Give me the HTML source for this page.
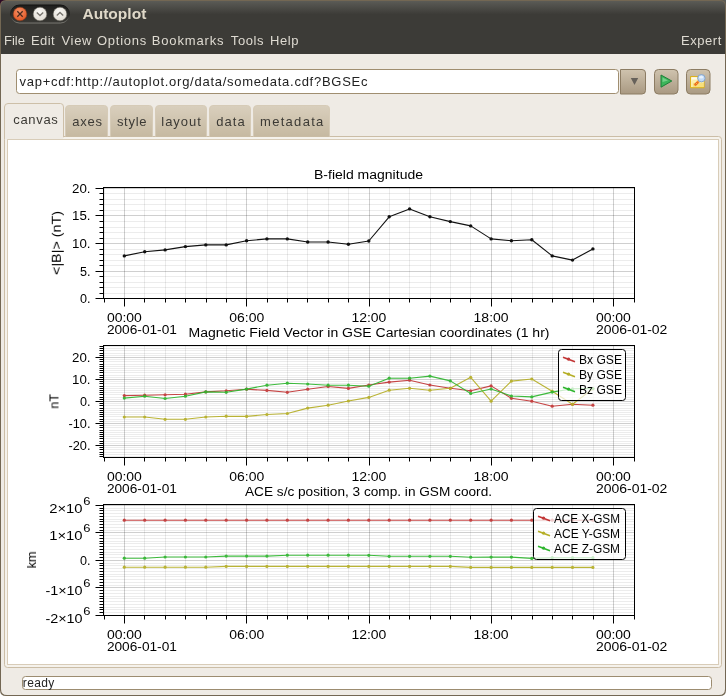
<!DOCTYPE html><html><head><meta charset="utf-8"><style>
html,body{margin:0;padding:0;background:#2c0a24;}
svg{display:block;font-family:"Liberation Sans", sans-serif;}
.g{will-change:transform;}
</style></head><body>
<svg width="726" height="696" viewBox="0 0 726 696" shape-rendering="auto">
<defs>
<linearGradient id="tg" x1="0" y1="0" x2="0" y2="1">
 <stop offset="0" stop-color="#5b5b56"/><stop offset="1" stop-color="#3c3b37"/>
</linearGradient>
<linearGradient id="btn" x1="0" y1="0" x2="0" y2="1">
 <stop offset="0" stop-color="#cfc3ae"/><stop offset="1" stop-color="#a99982"/>
</linearGradient>
<linearGradient id="itab" x1="0" y1="0" x2="0" y2="1">
 <stop offset="0" stop-color="#d9cfbd"/><stop offset="1" stop-color="#c6b9a1"/>
</linearGradient>
<radialGradient id="closeg" cx="0.45" cy="0.35" r="0.7">
 <stop offset="0" stop-color="#f7946a"/><stop offset="1" stop-color="#e0511e"/>
</radialGradient>
<radialGradient id="wg" cx="0.45" cy="0.35" r="0.7">
 <stop offset="0" stop-color="#fbfaf7"/><stop offset="1" stop-color="#ddd8ce"/>
</radialGradient>
<linearGradient id="pills" x1="0" y1="0" x2="0" y2="1">
 <stop offset="0" stop-color="#121211"/><stop offset="0.6" stop-color="#2a2a27"/><stop offset="1" stop-color="#7a7973"/>
</linearGradient>
<linearGradient id="pill" x1="0" y1="0" x2="0" y2="1">
 <stop offset="0" stop-color="#1e1e1c"/><stop offset="1" stop-color="#3a3935"/>
</linearGradient>
</defs>

<rect x="0" y="0" width="726" height="696" fill="#2c0a24"/>
<rect x="716" y="0" width="10" height="10" fill="#5a5a55"/>
<rect x="0" y="680" width="726" height="16" fill="#ffffff"/>
<path d="M0 6 Q0 0 6 0 H720 Q726 0 726 6 V690 Q726 696 720 696 H6 Q0 696 0 690 Z" fill="#736753"/>
<path d="M1 14 H725 V689 Q725 695 719 695 H7 Q1 695 1 689 Z" fill="#efebe5"/>
<rect x="1" y="14" width="724" height="40" fill="#3c3b37"/>
<path d="M1 6 Q1 1 6 1 H720 Q725 1 725 6 V14.5 H1 Z" fill="url(#tg)"/>
<rect x="10.5" y="5" width="59" height="18" rx="9" fill="url(#pill)" stroke="url(#pills)" stroke-width="1"/>
<circle cx="20" cy="14" r="6.8" fill="url(#closeg)" stroke="#8a3a1a" stroke-width="0.5"/>
<path d="M17.3 11.3 L22.7 16.7 M22.7 11.3 L17.3 16.7" stroke="#4a2a1e" stroke-width="1.3"/>
<circle cx="40" cy="14" r="6.8" fill="url(#wg)" stroke="#6a6860" stroke-width="0.5"/>
<path d="M36.8 12.5 L40 15.5 L43.2 12.5" stroke="#77746d" stroke-width="1.4" fill="none"/>
<circle cx="60" cy="14" r="6.8" fill="url(#wg)" stroke="#6a6860" stroke-width="0.5"/>
<path d="M56.8 15.5 L60 12.5 L63.2 15.5" stroke="#77746d" stroke-width="1.4" fill="none"/>
<text class="g" x="82.4" y="18.8" font-size="14.5" fill="#dfd8c8" font-weight="bold" text-anchor="start" textLength="64.0" lengthAdjust="spacingAndGlyphs" >Autoplot</text>
<text class="g" x="4.0" y="44.5" font-size="13" fill="#dfdbd2" font-weight="normal" text-anchor="start" textLength="20.9" lengthAdjust="spacing" >File</text>
<text class="g" x="30.9" y="44.5" font-size="13" fill="#dfdbd2" font-weight="normal" text-anchor="start" textLength="23.7" lengthAdjust="spacing" >Edit</text>
<text class="g" x="61.5" y="44.5" font-size="13" fill="#dfdbd2" font-weight="normal" text-anchor="start" textLength="29.9" lengthAdjust="spacing" >View</text>
<text class="g" x="97.0" y="44.5" font-size="13" fill="#dfdbd2" font-weight="normal" text-anchor="start" textLength="49.2" lengthAdjust="spacing" >Options</text>
<text class="g" x="151.7" y="44.5" font-size="13" fill="#dfdbd2" font-weight="normal" text-anchor="start" textLength="71.9" lengthAdjust="spacing" >Bookmarks</text>
<text class="g" x="230.8" y="44.5" font-size="13" fill="#dfdbd2" font-weight="normal" text-anchor="start" textLength="32.7" lengthAdjust="spacing" >Tools</text>
<text class="g" x="269.9" y="44.5" font-size="13" fill="#dfdbd2" font-weight="normal" text-anchor="start" textLength="28.7" lengthAdjust="spacing" >Help</text>
<text class="g" x="680.9" y="44.5" font-size="13" fill="#dfdbd2" font-weight="normal" text-anchor="start" textLength="40.5" lengthAdjust="spacing" >Expert</text>
<rect x="16.5" y="69.5" width="602" height="24" rx="3" fill="#fff" stroke="#a08e70" stroke-width="1"/>
<text class="g" x="19.5" y="86.1" font-size="13" fill="#222" font-weight="normal" text-anchor="start" textLength="348.0" lengthAdjust="spacing" >vap+cdf:http://autoplot.org/data/somedata.cdf?BGSEc</text>
<path d="M620.5 69.5 H642 Q645.5 69.5 645.5 73 V90.5 Q645.5 94 642 94 H620.5 Z" fill="url(#btn)" stroke="#8c7c63" stroke-width="1"/>
<path d="M630.8 78 H638.2 L634.5 85 Z" fill="#66615a"/>
<rect x="654.5" y="69.5" width="23.5" height="24.5" rx="4" fill="url(#btn)" stroke="#8c7c63" stroke-width="1"/>
<path d="M661 75 L671.8 81 L661 87.2 Z" fill="#3cb55a" stroke="#1f7f38" stroke-width="1" stroke-linejoin="round"/>
<path d="M662.5 77.5 L668 80.5 L662.5 82 Z" fill="#8fdc9e" opacity="0.7"/>
<rect x="686.5" y="69.5" width="23.5" height="24.5" rx="4" fill="url(#btn)" stroke="#8c7c63" stroke-width="1"/>
<rect x="690" y="76" width="14.6" height="12.2" rx="1" fill="#dcb21e"/>
<rect x="691.1" y="77.1" width="6.5" height="4" fill="#fffbea"/>
<rect x="691.1" y="79.3" width="12.4" height="7.8" fill="#fdf3c2"/>
<rect x="692.6" y="80.6" width="11" height="6.4" fill="#f8e07c"/>
<rect x="692.6" y="80.6" width="11" height="2.2" fill="#fdf0b0"/>
<path d="M694.6 85.4 L698.6 81.3" stroke="#e8601e" stroke-width="2.6"/>
<path d="M694.6 85.4 L698.6 81.3" stroke="#ffc83a" stroke-width="1.2" stroke-dasharray="1 1.2"/>
<circle cx="701.4" cy="78.2" r="3.7" fill="#c2daf6" stroke="#7f9fc8" stroke-width="0.9"/>
<ellipse cx="701.2" cy="77.3" rx="2.2" ry="1.3" fill="#e8f2fd"/>
<rect x="4.5" y="136.5" width="717" height="531" fill="#f5f2ec" stroke="#cbbda6" stroke-width="1" rx="3"/>
<rect x="7.5" y="139.5" width="711" height="525" fill="#fff" stroke="#d8ccb8" stroke-width="1"/>
<path d="M65.5 136.5 V109 Q65.5 105.5 69 105.5 H104.5 Q107.5 105.5 107.5 109 V136.5" fill="url(#itab)" stroke="#d6cbb7" stroke-width="1"/>
<text class="g" x="72.2" y="126.2" font-size="13" fill="#3c3a35" font-weight="normal" text-anchor="start" textLength="29.8" lengthAdjust="spacing" >axes</text>
<path d="M110.5 136.5 V109 Q110.5 105.5 114 105.5 H149.5 Q152.5 105.5 152.5 109 V136.5" fill="url(#itab)" stroke="#d6cbb7" stroke-width="1"/>
<text class="g" x="116.9" y="126.2" font-size="13" fill="#3c3a35" font-weight="normal" text-anchor="start" textLength="29.6" lengthAdjust="spacing" >style</text>
<path d="M155.5 136.5 V109 Q155.5 105.5 159 105.5 H203.5 Q206.5 105.5 206.5 109 V136.5" fill="url(#itab)" stroke="#d6cbb7" stroke-width="1"/>
<text class="g" x="161.3" y="126.2" font-size="13" fill="#3c3a35" font-weight="normal" text-anchor="start" textLength="39.5" lengthAdjust="spacing" >layout</text>
<path d="M209.5 136.5 V109 Q209.5 105.5 213 105.5 H247.5 Q250.5 105.5 250.5 109 V136.5" fill="url(#itab)" stroke="#d6cbb7" stroke-width="1"/>
<text class="g" x="216.3" y="126.2" font-size="13" fill="#3c3a35" font-weight="normal" text-anchor="start" textLength="28.4" lengthAdjust="spacing" >data</text>
<path d="M253.5 136.5 V109 Q253.5 105.5 257 105.5 H326.5 Q329.5 105.5 329.5 109 V136.5" fill="url(#itab)" stroke="#d6cbb7" stroke-width="1"/>
<text class="g" x="260.0" y="126.2" font-size="13" fill="#3c3a35" font-weight="normal" text-anchor="start" textLength="63.3" lengthAdjust="spacing" >metadata</text>
<path d="M4.5 139 V107 Q4.5 103.5 8 103.5 H60.5 Q63.5 103.5 63.5 107 V137 H4.5 Z" fill="#efebe5" stroke="#cdbfa8" stroke-width="1"/>
<rect x="5" y="136" width="58" height="3.5" fill="#efebe5"/>
<path d="M7.5 140 V139.5 H63.5" stroke="#d8ccb8" stroke-width="1" fill="none"/>
<text class="g" x="13.3" y="124.2" font-size="13" fill="#3c3a35" font-weight="normal" text-anchor="start" textLength="44.5" lengthAdjust="spacing" >canvas</text>
<rect x="22.5" y="676.5" width="689" height="13" rx="3" fill="#fff" stroke="#9c8c70" stroke-width="1"/>
<text class="g" x="22.8" y="687.0" font-size="12" fill="#222" font-weight="normal" text-anchor="start" textLength="31.5" lengthAdjust="spacing" >ready</text>
<clipPath id="c1"><rect x="103.5" y="187.5" width="531.0" height="111.0"/></clipPath>
<path d="M95.5 298.5 H103.5" stroke="#000" stroke-width="1"/>
<path d="M99.5 293.5 H103.5" stroke="#000" stroke-width="1"/>
<path d="M99.5 287.5 H103.5" stroke="#000" stroke-width="1"/>
<path d="M99.5 282.5 H103.5" stroke="#000" stroke-width="1"/>
<path d="M99.5 276.5 H103.5" stroke="#000" stroke-width="1"/>
<path d="M95.5 271.5 H103.5" stroke="#000" stroke-width="1"/>
<path d="M99.5 265.5 H103.5" stroke="#000" stroke-width="1"/>
<path d="M99.5 260.5 H103.5" stroke="#000" stroke-width="1"/>
<path d="M99.5 254.5 H103.5" stroke="#000" stroke-width="1"/>
<path d="M99.5 249.5 H103.5" stroke="#000" stroke-width="1"/>
<path d="M95.5 243.5 H103.5" stroke="#000" stroke-width="1"/>
<path d="M99.5 238.5 H103.5" stroke="#000" stroke-width="1"/>
<path d="M99.5 232.5 H103.5" stroke="#000" stroke-width="1"/>
<path d="M99.5 227.5 H103.5" stroke="#000" stroke-width="1"/>
<path d="M99.5 221.5 H103.5" stroke="#000" stroke-width="1"/>
<path d="M95.5 215.5 H103.5" stroke="#000" stroke-width="1"/>
<path d="M99.5 210.5 H103.5" stroke="#000" stroke-width="1"/>
<path d="M99.5 204.5 H103.5" stroke="#000" stroke-width="1"/>
<path d="M99.5 199.5 H103.5" stroke="#000" stroke-width="1"/>
<path d="M99.5 193.5 H103.5" stroke="#000" stroke-width="1"/>
<path d="M95.5 188.5 H103.5" stroke="#000" stroke-width="1"/>
<path d="M104.5 298.5 V302.5" stroke="#000" stroke-width="1"/>
<path d="M124.5 298.5 V306.5" stroke="#000" stroke-width="1"/>
<path d="M144.5 298.5 V302.5" stroke="#000" stroke-width="1"/>
<path d="M165.5 298.5 V302.5" stroke="#000" stroke-width="1"/>
<path d="M185.5 298.5 V302.5" stroke="#000" stroke-width="1"/>
<path d="M206.5 298.5 V302.5" stroke="#000" stroke-width="1"/>
<path d="M226.5 298.5 V302.5" stroke="#000" stroke-width="1"/>
<path d="M246.5 298.5 V306.5" stroke="#000" stroke-width="1"/>
<path d="M267.5 298.5 V302.5" stroke="#000" stroke-width="1"/>
<path d="M287.5 298.5 V302.5" stroke="#000" stroke-width="1"/>
<path d="M307.5 298.5 V302.5" stroke="#000" stroke-width="1"/>
<path d="M328.5 298.5 V302.5" stroke="#000" stroke-width="1"/>
<path d="M348.5 298.5 V302.5" stroke="#000" stroke-width="1"/>
<path d="M369.5 298.5 V306.5" stroke="#000" stroke-width="1"/>
<path d="M389.5 298.5 V302.5" stroke="#000" stroke-width="1"/>
<path d="M409.5 298.5 V302.5" stroke="#000" stroke-width="1"/>
<path d="M430.5 298.5 V302.5" stroke="#000" stroke-width="1"/>
<path d="M450.5 298.5 V302.5" stroke="#000" stroke-width="1"/>
<path d="M470.5 298.5 V302.5" stroke="#000" stroke-width="1"/>
<path d="M491.5 298.5 V306.5" stroke="#000" stroke-width="1"/>
<path d="M511.5 298.5 V302.5" stroke="#000" stroke-width="1"/>
<path d="M532.5 298.5 V302.5" stroke="#000" stroke-width="1"/>
<path d="M552.5 298.5 V302.5" stroke="#000" stroke-width="1"/>
<path d="M572.5 298.5 V302.5" stroke="#000" stroke-width="1"/>
<path d="M593.5 298.5 V302.5" stroke="#000" stroke-width="1"/>
<path d="M613.5 298.5 V306.5" stroke="#000" stroke-width="1"/>
<path d="M634.5 298.5 V302.5" stroke="#000" stroke-width="1"/>
<g shape-rendering="crispEdges"><path d="M103.5 293.5 H634.5" stroke="rgba(0,0,0,0.075)" stroke-width="1"/><path d="M103.5 287.5 H634.5" stroke="rgba(0,0,0,0.075)" stroke-width="1"/><path d="M103.5 282.5 H634.5" stroke="rgba(0,0,0,0.075)" stroke-width="1"/><path d="M103.5 276.5 H634.5" stroke="rgba(0,0,0,0.075)" stroke-width="1"/><path d="M103.5 271.5 H634.5" stroke="rgba(0,0,0,0.19)" stroke-width="1"/><path d="M103.5 265.5 H634.5" stroke="rgba(0,0,0,0.075)" stroke-width="1"/><path d="M103.5 260.5 H634.5" stroke="rgba(0,0,0,0.075)" stroke-width="1"/><path d="M103.5 254.5 H634.5" stroke="rgba(0,0,0,0.075)" stroke-width="1"/><path d="M103.5 249.5 H634.5" stroke="rgba(0,0,0,0.075)" stroke-width="1"/><path d="M103.5 243.5 H634.5" stroke="rgba(0,0,0,0.19)" stroke-width="1"/><path d="M103.5 238.5 H634.5" stroke="rgba(0,0,0,0.075)" stroke-width="1"/><path d="M103.5 232.5 H634.5" stroke="rgba(0,0,0,0.075)" stroke-width="1"/><path d="M103.5 227.5 H634.5" stroke="rgba(0,0,0,0.075)" stroke-width="1"/><path d="M103.5 221.5 H634.5" stroke="rgba(0,0,0,0.075)" stroke-width="1"/><path d="M103.5 215.5 H634.5" stroke="rgba(0,0,0,0.19)" stroke-width="1"/><path d="M103.5 210.5 H634.5" stroke="rgba(0,0,0,0.075)" stroke-width="1"/><path d="M103.5 204.5 H634.5" stroke="rgba(0,0,0,0.075)" stroke-width="1"/><path d="M103.5 199.5 H634.5" stroke="rgba(0,0,0,0.075)" stroke-width="1"/><path d="M103.5 193.5 H634.5" stroke="rgba(0,0,0,0.075)" stroke-width="1"/><path d="M103.5 188.5 H634.5" stroke="rgba(0,0,0,0.19)" stroke-width="1"/><path d="M104.5 187.5 V298.5" stroke="rgba(0,0,0,0.08)" stroke-width="1"/><path d="M124.5 187.5 V298.5" stroke="rgba(0,0,0,0.19)" stroke-width="1"/><path d="M144.5 187.5 V298.5" stroke="rgba(0,0,0,0.08)" stroke-width="1"/><path d="M165.5 187.5 V298.5" stroke="rgba(0,0,0,0.08)" stroke-width="1"/><path d="M185.5 187.5 V298.5" stroke="rgba(0,0,0,0.08)" stroke-width="1"/><path d="M206.5 187.5 V298.5" stroke="rgba(0,0,0,0.08)" stroke-width="1"/><path d="M226.5 187.5 V298.5" stroke="rgba(0,0,0,0.08)" stroke-width="1"/><path d="M246.5 187.5 V298.5" stroke="rgba(0,0,0,0.19)" stroke-width="1"/><path d="M267.5 187.5 V298.5" stroke="rgba(0,0,0,0.08)" stroke-width="1"/><path d="M287.5 187.5 V298.5" stroke="rgba(0,0,0,0.08)" stroke-width="1"/><path d="M307.5 187.5 V298.5" stroke="rgba(0,0,0,0.08)" stroke-width="1"/><path d="M328.5 187.5 V298.5" stroke="rgba(0,0,0,0.08)" stroke-width="1"/><path d="M348.5 187.5 V298.5" stroke="rgba(0,0,0,0.08)" stroke-width="1"/><path d="M369.5 187.5 V298.5" stroke="rgba(0,0,0,0.19)" stroke-width="1"/><path d="M389.5 187.5 V298.5" stroke="rgba(0,0,0,0.08)" stroke-width="1"/><path d="M409.5 187.5 V298.5" stroke="rgba(0,0,0,0.08)" stroke-width="1"/><path d="M430.5 187.5 V298.5" stroke="rgba(0,0,0,0.08)" stroke-width="1"/><path d="M450.5 187.5 V298.5" stroke="rgba(0,0,0,0.08)" stroke-width="1"/><path d="M470.5 187.5 V298.5" stroke="rgba(0,0,0,0.08)" stroke-width="1"/><path d="M491.5 187.5 V298.5" stroke="rgba(0,0,0,0.19)" stroke-width="1"/><path d="M511.5 187.5 V298.5" stroke="rgba(0,0,0,0.08)" stroke-width="1"/><path d="M532.5 187.5 V298.5" stroke="rgba(0,0,0,0.08)" stroke-width="1"/><path d="M552.5 187.5 V298.5" stroke="rgba(0,0,0,0.08)" stroke-width="1"/><path d="M572.5 187.5 V298.5" stroke="rgba(0,0,0,0.08)" stroke-width="1"/><path d="M593.5 187.5 V298.5" stroke="rgba(0,0,0,0.08)" stroke-width="1"/><path d="M613.5 187.5 V298.5" stroke="rgba(0,0,0,0.19)" stroke-width="1"/></g>
<g opacity="1.0"><path d="M124.3 255.9 L144.7 251.8 L165.1 249.9 L185.4 246.6 L205.8 244.9 L226.2 244.9 L246.6 240.8 L266.9 238.9 L287.3 238.9 L307.7 242.0 L328.1 242.0 L348.4 244.3 L368.8 241.0 L389.2 216.8 L409.6 208.9 L429.9 216.8 L450.3 221.6 L470.7 225.9 L491.1 238.9 L511.4 240.8 L531.8 239.7 L552.2 255.9 L572.5 260.1 L592.9 248.9" fill="none" stroke="#111" stroke-width="1.1" stroke-linejoin="round"/>
<circle cx="124.3" cy="255.9" r="1.7" fill="#111"/>
<circle cx="144.7" cy="251.8" r="1.7" fill="#111"/>
<circle cx="165.1" cy="249.9" r="1.7" fill="#111"/>
<circle cx="185.4" cy="246.6" r="1.7" fill="#111"/>
<circle cx="205.8" cy="244.9" r="1.7" fill="#111"/>
<circle cx="226.2" cy="244.9" r="1.7" fill="#111"/>
<circle cx="246.6" cy="240.8" r="1.7" fill="#111"/>
<circle cx="266.9" cy="238.9" r="1.7" fill="#111"/>
<circle cx="287.3" cy="238.9" r="1.7" fill="#111"/>
<circle cx="307.7" cy="242.0" r="1.7" fill="#111"/>
<circle cx="328.1" cy="242.0" r="1.7" fill="#111"/>
<circle cx="348.4" cy="244.3" r="1.7" fill="#111"/>
<circle cx="368.8" cy="241.0" r="1.7" fill="#111"/>
<circle cx="389.2" cy="216.8" r="1.7" fill="#111"/>
<circle cx="409.6" cy="208.9" r="1.7" fill="#111"/>
<circle cx="429.9" cy="216.8" r="1.7" fill="#111"/>
<circle cx="450.3" cy="221.6" r="1.7" fill="#111"/>
<circle cx="470.7" cy="225.9" r="1.7" fill="#111"/>
<circle cx="491.1" cy="238.9" r="1.7" fill="#111"/>
<circle cx="511.4" cy="240.8" r="1.7" fill="#111"/>
<circle cx="531.8" cy="239.7" r="1.7" fill="#111"/>
<circle cx="552.2" cy="255.9" r="1.7" fill="#111"/>
<circle cx="572.5" cy="260.1" r="1.7" fill="#111"/>
<circle cx="592.9" cy="248.9" r="1.7" fill="#111"/>
</g>
<rect x="103.5" y="187.5" width="531.0" height="111.0" fill="none" stroke="#000" stroke-width="1"/>
<text class="g" x="314.0" y="178.9" font-size="12" fill="#000" font-weight="normal" text-anchor="start" textLength="109.0" lengthAdjust="spacingAndGlyphs" >B-field magnitude</text>
<text class="g" x="90.5" y="192.9" font-size="12.3" fill="#000" font-weight="normal" text-anchor="end" textLength="18.5" lengthAdjust="spacingAndGlyphs" >20.</text>
<text class="g" x="90.5" y="219.9" font-size="12.3" fill="#000" font-weight="normal" text-anchor="end" textLength="18.5" lengthAdjust="spacingAndGlyphs" >15.</text>
<text class="g" x="90.5" y="247.9" font-size="12.3" fill="#000" font-weight="normal" text-anchor="end" textLength="18.5" lengthAdjust="spacingAndGlyphs" >10.</text>
<text class="g" x="90.5" y="275.9" font-size="12.3" fill="#000" font-weight="normal" text-anchor="end" textLength="10.5" lengthAdjust="spacingAndGlyphs" >5.</text>
<text class="g" x="90.5" y="302.9" font-size="12.3" fill="#000" font-weight="normal" text-anchor="end" textLength="10.5" lengthAdjust="spacingAndGlyphs" >0.</text>
<text class="g" transform="translate(60.8,243) rotate(-90)" font-size="12.5" text-anchor="middle" textLength="64" lengthAdjust="spacingAndGlyphs" fill="#000">&lt;|B|&gt; (nT)</text>
<text class="g" x="106.9" y="322.0" font-size="12" fill="#000" font-weight="normal" text-anchor="start" textLength="35.0" lengthAdjust="spacingAndGlyphs" >00:00</text>
<text class="g" x="229.2" y="322.0" font-size="12" fill="#000" font-weight="normal" text-anchor="start" textLength="35.0" lengthAdjust="spacingAndGlyphs" >06:00</text>
<text class="g" x="351.4" y="322.0" font-size="12" fill="#000" font-weight="normal" text-anchor="start" textLength="35.0" lengthAdjust="spacingAndGlyphs" >12:00</text>
<text class="g" x="473.6" y="322.0" font-size="12" fill="#000" font-weight="normal" text-anchor="start" textLength="35.0" lengthAdjust="spacingAndGlyphs" >18:00</text>
<text class="g" x="595.9" y="322.0" font-size="12" fill="#000" font-weight="normal" text-anchor="start" textLength="35.0" lengthAdjust="spacingAndGlyphs" >00:00</text>
<text class="g" x="106.9" y="334.4" font-size="12" fill="#000" font-weight="normal" text-anchor="start" textLength="70.0" lengthAdjust="spacingAndGlyphs" >2006-01-01</text>
<text class="g" x="595.9" y="334.4" font-size="12" fill="#000" font-weight="normal" text-anchor="start" textLength="71.5" lengthAdjust="spacingAndGlyphs" >2006-01-02</text>
<clipPath id="c2"><rect x="103.5" y="345.5" width="531.0" height="112.0"/></clipPath>
<path d="M99.5 456.5 H103.5" stroke="#000" stroke-width="1"/>
<path d="M99.5 454.5 H103.5" stroke="#000" stroke-width="1"/>
<path d="M99.5 452.5 H103.5" stroke="#000" stroke-width="1"/>
<path d="M99.5 449.5 H103.5" stroke="#000" stroke-width="1"/>
<path d="M99.5 447.5 H103.5" stroke="#000" stroke-width="1"/>
<path d="M95.5 445.5 H103.5" stroke="#000" stroke-width="1"/>
<path d="M99.5 443.5 H103.5" stroke="#000" stroke-width="1"/>
<path d="M99.5 441.5 H103.5" stroke="#000" stroke-width="1"/>
<path d="M99.5 438.5 H103.5" stroke="#000" stroke-width="1"/>
<path d="M99.5 436.5 H103.5" stroke="#000" stroke-width="1"/>
<path d="M99.5 434.5 H103.5" stroke="#000" stroke-width="1"/>
<path d="M99.5 432.5 H103.5" stroke="#000" stroke-width="1"/>
<path d="M99.5 430.5 H103.5" stroke="#000" stroke-width="1"/>
<path d="M99.5 427.5 H103.5" stroke="#000" stroke-width="1"/>
<path d="M99.5 425.5 H103.5" stroke="#000" stroke-width="1"/>
<path d="M95.5 423.5 H103.5" stroke="#000" stroke-width="1"/>
<path d="M99.5 421.5 H103.5" stroke="#000" stroke-width="1"/>
<path d="M99.5 419.5 H103.5" stroke="#000" stroke-width="1"/>
<path d="M99.5 416.5 H103.5" stroke="#000" stroke-width="1"/>
<path d="M99.5 414.5 H103.5" stroke="#000" stroke-width="1"/>
<path d="M99.5 412.5 H103.5" stroke="#000" stroke-width="1"/>
<path d="M99.5 410.5 H103.5" stroke="#000" stroke-width="1"/>
<path d="M99.5 408.5 H103.5" stroke="#000" stroke-width="1"/>
<path d="M99.5 405.5 H103.5" stroke="#000" stroke-width="1"/>
<path d="M99.5 403.5 H103.5" stroke="#000" stroke-width="1"/>
<path d="M95.5 401.5 H103.5" stroke="#000" stroke-width="1"/>
<path d="M99.5 399.5 H103.5" stroke="#000" stroke-width="1"/>
<path d="M99.5 397.5 H103.5" stroke="#000" stroke-width="1"/>
<path d="M99.5 394.5 H103.5" stroke="#000" stroke-width="1"/>
<path d="M99.5 392.5 H103.5" stroke="#000" stroke-width="1"/>
<path d="M99.5 390.5 H103.5" stroke="#000" stroke-width="1"/>
<path d="M99.5 388.5 H103.5" stroke="#000" stroke-width="1"/>
<path d="M99.5 386.5 H103.5" stroke="#000" stroke-width="1"/>
<path d="M99.5 383.5 H103.5" stroke="#000" stroke-width="1"/>
<path d="M99.5 381.5 H103.5" stroke="#000" stroke-width="1"/>
<path d="M95.5 379.5 H103.5" stroke="#000" stroke-width="1"/>
<path d="M99.5 377.5 H103.5" stroke="#000" stroke-width="1"/>
<path d="M99.5 375.5 H103.5" stroke="#000" stroke-width="1"/>
<path d="M99.5 372.5 H103.5" stroke="#000" stroke-width="1"/>
<path d="M99.5 370.5 H103.5" stroke="#000" stroke-width="1"/>
<path d="M99.5 368.5 H103.5" stroke="#000" stroke-width="1"/>
<path d="M99.5 366.5 H103.5" stroke="#000" stroke-width="1"/>
<path d="M99.5 364.5 H103.5" stroke="#000" stroke-width="1"/>
<path d="M99.5 361.5 H103.5" stroke="#000" stroke-width="1"/>
<path d="M99.5 359.5 H103.5" stroke="#000" stroke-width="1"/>
<path d="M95.5 357.5 H103.5" stroke="#000" stroke-width="1"/>
<path d="M99.5 355.5 H103.5" stroke="#000" stroke-width="1"/>
<path d="M99.5 353.5 H103.5" stroke="#000" stroke-width="1"/>
<path d="M99.5 350.5 H103.5" stroke="#000" stroke-width="1"/>
<path d="M99.5 348.5 H103.5" stroke="#000" stroke-width="1"/>
<path d="M99.5 346.5 H103.5" stroke="#000" stroke-width="1"/>
<path d="M104.5 457.5 V461.5" stroke="#000" stroke-width="1"/>
<path d="M124.5 457.5 V465.5" stroke="#000" stroke-width="1"/>
<path d="M144.5 457.5 V461.5" stroke="#000" stroke-width="1"/>
<path d="M165.5 457.5 V461.5" stroke="#000" stroke-width="1"/>
<path d="M185.5 457.5 V461.5" stroke="#000" stroke-width="1"/>
<path d="M206.5 457.5 V461.5" stroke="#000" stroke-width="1"/>
<path d="M226.5 457.5 V461.5" stroke="#000" stroke-width="1"/>
<path d="M246.5 457.5 V465.5" stroke="#000" stroke-width="1"/>
<path d="M267.5 457.5 V461.5" stroke="#000" stroke-width="1"/>
<path d="M287.5 457.5 V461.5" stroke="#000" stroke-width="1"/>
<path d="M307.5 457.5 V461.5" stroke="#000" stroke-width="1"/>
<path d="M328.5 457.5 V461.5" stroke="#000" stroke-width="1"/>
<path d="M348.5 457.5 V461.5" stroke="#000" stroke-width="1"/>
<path d="M369.5 457.5 V465.5" stroke="#000" stroke-width="1"/>
<path d="M389.5 457.5 V461.5" stroke="#000" stroke-width="1"/>
<path d="M409.5 457.5 V461.5" stroke="#000" stroke-width="1"/>
<path d="M430.5 457.5 V461.5" stroke="#000" stroke-width="1"/>
<path d="M450.5 457.5 V461.5" stroke="#000" stroke-width="1"/>
<path d="M470.5 457.5 V461.5" stroke="#000" stroke-width="1"/>
<path d="M491.5 457.5 V465.5" stroke="#000" stroke-width="1"/>
<path d="M511.5 457.5 V461.5" stroke="#000" stroke-width="1"/>
<path d="M532.5 457.5 V461.5" stroke="#000" stroke-width="1"/>
<path d="M552.5 457.5 V461.5" stroke="#000" stroke-width="1"/>
<path d="M572.5 457.5 V461.5" stroke="#000" stroke-width="1"/>
<path d="M593.5 457.5 V461.5" stroke="#000" stroke-width="1"/>
<path d="M613.5 457.5 V465.5" stroke="#000" stroke-width="1"/>
<path d="M634.5 457.5 V461.5" stroke="#000" stroke-width="1"/>
<g shape-rendering="crispEdges"><path d="M103.5 456.5 H634.5" stroke="rgba(0,0,0,0.075)" stroke-width="1"/><path d="M103.5 454.5 H634.5" stroke="rgba(0,0,0,0.075)" stroke-width="1"/><path d="M103.5 452.5 H634.5" stroke="rgba(0,0,0,0.075)" stroke-width="1"/><path d="M103.5 449.5 H634.5" stroke="rgba(0,0,0,0.075)" stroke-width="1"/><path d="M103.5 447.5 H634.5" stroke="rgba(0,0,0,0.075)" stroke-width="1"/><path d="M103.5 445.5 H634.5" stroke="rgba(0,0,0,0.19)" stroke-width="1"/><path d="M103.5 443.5 H634.5" stroke="rgba(0,0,0,0.075)" stroke-width="1"/><path d="M103.5 441.5 H634.5" stroke="rgba(0,0,0,0.075)" stroke-width="1"/><path d="M103.5 438.5 H634.5" stroke="rgba(0,0,0,0.075)" stroke-width="1"/><path d="M103.5 436.5 H634.5" stroke="rgba(0,0,0,0.075)" stroke-width="1"/><path d="M103.5 434.5 H634.5" stroke="rgba(0,0,0,0.075)" stroke-width="1"/><path d="M103.5 432.5 H634.5" stroke="rgba(0,0,0,0.075)" stroke-width="1"/><path d="M103.5 430.5 H634.5" stroke="rgba(0,0,0,0.075)" stroke-width="1"/><path d="M103.5 427.5 H634.5" stroke="rgba(0,0,0,0.075)" stroke-width="1"/><path d="M103.5 425.5 H634.5" stroke="rgba(0,0,0,0.075)" stroke-width="1"/><path d="M103.5 423.5 H634.5" stroke="rgba(0,0,0,0.19)" stroke-width="1"/><path d="M103.5 421.5 H634.5" stroke="rgba(0,0,0,0.075)" stroke-width="1"/><path d="M103.5 419.5 H634.5" stroke="rgba(0,0,0,0.075)" stroke-width="1"/><path d="M103.5 416.5 H634.5" stroke="rgba(0,0,0,0.075)" stroke-width="1"/><path d="M103.5 414.5 H634.5" stroke="rgba(0,0,0,0.075)" stroke-width="1"/><path d="M103.5 412.5 H634.5" stroke="rgba(0,0,0,0.075)" stroke-width="1"/><path d="M103.5 410.5 H634.5" stroke="rgba(0,0,0,0.075)" stroke-width="1"/><path d="M103.5 408.5 H634.5" stroke="rgba(0,0,0,0.075)" stroke-width="1"/><path d="M103.5 405.5 H634.5" stroke="rgba(0,0,0,0.075)" stroke-width="1"/><path d="M103.5 403.5 H634.5" stroke="rgba(0,0,0,0.075)" stroke-width="1"/><path d="M103.5 401.5 H634.5" stroke="rgba(0,0,0,0.19)" stroke-width="1"/><path d="M103.5 399.5 H634.5" stroke="rgba(0,0,0,0.075)" stroke-width="1"/><path d="M103.5 397.5 H634.5" stroke="rgba(0,0,0,0.075)" stroke-width="1"/><path d="M103.5 394.5 H634.5" stroke="rgba(0,0,0,0.075)" stroke-width="1"/><path d="M103.5 392.5 H634.5" stroke="rgba(0,0,0,0.075)" stroke-width="1"/><path d="M103.5 390.5 H634.5" stroke="rgba(0,0,0,0.075)" stroke-width="1"/><path d="M103.5 388.5 H634.5" stroke="rgba(0,0,0,0.075)" stroke-width="1"/><path d="M103.5 386.5 H634.5" stroke="rgba(0,0,0,0.075)" stroke-width="1"/><path d="M103.5 383.5 H634.5" stroke="rgba(0,0,0,0.075)" stroke-width="1"/><path d="M103.5 381.5 H634.5" stroke="rgba(0,0,0,0.075)" stroke-width="1"/><path d="M103.5 379.5 H634.5" stroke="rgba(0,0,0,0.19)" stroke-width="1"/><path d="M103.5 377.5 H634.5" stroke="rgba(0,0,0,0.075)" stroke-width="1"/><path d="M103.5 375.5 H634.5" stroke="rgba(0,0,0,0.075)" stroke-width="1"/><path d="M103.5 372.5 H634.5" stroke="rgba(0,0,0,0.075)" stroke-width="1"/><path d="M103.5 370.5 H634.5" stroke="rgba(0,0,0,0.075)" stroke-width="1"/><path d="M103.5 368.5 H634.5" stroke="rgba(0,0,0,0.075)" stroke-width="1"/><path d="M103.5 366.5 H634.5" stroke="rgba(0,0,0,0.075)" stroke-width="1"/><path d="M103.5 364.5 H634.5" stroke="rgba(0,0,0,0.075)" stroke-width="1"/><path d="M103.5 361.5 H634.5" stroke="rgba(0,0,0,0.075)" stroke-width="1"/><path d="M103.5 359.5 H634.5" stroke="rgba(0,0,0,0.075)" stroke-width="1"/><path d="M103.5 357.5 H634.5" stroke="rgba(0,0,0,0.19)" stroke-width="1"/><path d="M103.5 355.5 H634.5" stroke="rgba(0,0,0,0.075)" stroke-width="1"/><path d="M103.5 353.5 H634.5" stroke="rgba(0,0,0,0.075)" stroke-width="1"/><path d="M103.5 350.5 H634.5" stroke="rgba(0,0,0,0.075)" stroke-width="1"/><path d="M103.5 348.5 H634.5" stroke="rgba(0,0,0,0.075)" stroke-width="1"/><path d="M103.5 346.5 H634.5" stroke="rgba(0,0,0,0.075)" stroke-width="1"/><path d="M104.5 345.5 V457.5" stroke="rgba(0,0,0,0.08)" stroke-width="1"/><path d="M124.5 345.5 V457.5" stroke="rgba(0,0,0,0.19)" stroke-width="1"/><path d="M144.5 345.5 V457.5" stroke="rgba(0,0,0,0.08)" stroke-width="1"/><path d="M165.5 345.5 V457.5" stroke="rgba(0,0,0,0.08)" stroke-width="1"/><path d="M185.5 345.5 V457.5" stroke="rgba(0,0,0,0.08)" stroke-width="1"/><path d="M206.5 345.5 V457.5" stroke="rgba(0,0,0,0.08)" stroke-width="1"/><path d="M226.5 345.5 V457.5" stroke="rgba(0,0,0,0.08)" stroke-width="1"/><path d="M246.5 345.5 V457.5" stroke="rgba(0,0,0,0.19)" stroke-width="1"/><path d="M267.5 345.5 V457.5" stroke="rgba(0,0,0,0.08)" stroke-width="1"/><path d="M287.5 345.5 V457.5" stroke="rgba(0,0,0,0.08)" stroke-width="1"/><path d="M307.5 345.5 V457.5" stroke="rgba(0,0,0,0.08)" stroke-width="1"/><path d="M328.5 345.5 V457.5" stroke="rgba(0,0,0,0.08)" stroke-width="1"/><path d="M348.5 345.5 V457.5" stroke="rgba(0,0,0,0.08)" stroke-width="1"/><path d="M369.5 345.5 V457.5" stroke="rgba(0,0,0,0.19)" stroke-width="1"/><path d="M389.5 345.5 V457.5" stroke="rgba(0,0,0,0.08)" stroke-width="1"/><path d="M409.5 345.5 V457.5" stroke="rgba(0,0,0,0.08)" stroke-width="1"/><path d="M430.5 345.5 V457.5" stroke="rgba(0,0,0,0.08)" stroke-width="1"/><path d="M450.5 345.5 V457.5" stroke="rgba(0,0,0,0.08)" stroke-width="1"/><path d="M470.5 345.5 V457.5" stroke="rgba(0,0,0,0.08)" stroke-width="1"/><path d="M491.5 345.5 V457.5" stroke="rgba(0,0,0,0.19)" stroke-width="1"/><path d="M511.5 345.5 V457.5" stroke="rgba(0,0,0,0.08)" stroke-width="1"/><path d="M532.5 345.5 V457.5" stroke="rgba(0,0,0,0.08)" stroke-width="1"/><path d="M552.5 345.5 V457.5" stroke="rgba(0,0,0,0.08)" stroke-width="1"/><path d="M572.5 345.5 V457.5" stroke="rgba(0,0,0,0.08)" stroke-width="1"/><path d="M593.5 345.5 V457.5" stroke="rgba(0,0,0,0.08)" stroke-width="1"/><path d="M613.5 345.5 V457.5" stroke="rgba(0,0,0,0.19)" stroke-width="1"/></g>
<g opacity="0.92"><path d="M124.3 395.6 L144.7 395.2 L165.1 394.8 L185.4 394.2 L205.8 391.9 L226.2 390.8 L246.6 389.2 L266.9 390.4 L287.3 392.3 L307.7 389.2 L328.1 386.5 L348.4 388.4 L368.8 385.0 L389.2 382.1 L409.6 380.2 L429.9 385.0 L450.3 388.3 L470.7 390.8 L491.1 385.9 L511.4 398.3 L531.8 401.2 L552.2 406.2 L572.5 404.3 L592.9 405.2" fill="none" stroke="#c23636" stroke-width="1.1" stroke-linejoin="round"/>
<circle cx="124.3" cy="395.6" r="1.6" fill="#c23636"/>
<circle cx="144.7" cy="395.2" r="1.6" fill="#c23636"/>
<circle cx="165.1" cy="394.8" r="1.6" fill="#c23636"/>
<circle cx="185.4" cy="394.2" r="1.6" fill="#c23636"/>
<circle cx="205.8" cy="391.9" r="1.6" fill="#c23636"/>
<circle cx="226.2" cy="390.8" r="1.6" fill="#c23636"/>
<circle cx="246.6" cy="389.2" r="1.6" fill="#c23636"/>
<circle cx="266.9" cy="390.4" r="1.6" fill="#c23636"/>
<circle cx="287.3" cy="392.3" r="1.6" fill="#c23636"/>
<circle cx="307.7" cy="389.2" r="1.6" fill="#c23636"/>
<circle cx="328.1" cy="386.5" r="1.6" fill="#c23636"/>
<circle cx="348.4" cy="388.4" r="1.6" fill="#c23636"/>
<circle cx="368.8" cy="385.0" r="1.6" fill="#c23636"/>
<circle cx="389.2" cy="382.1" r="1.6" fill="#c23636"/>
<circle cx="409.6" cy="380.2" r="1.6" fill="#c23636"/>
<circle cx="429.9" cy="385.0" r="1.6" fill="#c23636"/>
<circle cx="450.3" cy="388.3" r="1.6" fill="#c23636"/>
<circle cx="470.7" cy="390.8" r="1.6" fill="#c23636"/>
<circle cx="491.1" cy="385.9" r="1.6" fill="#c23636"/>
<circle cx="511.4" cy="398.3" r="1.6" fill="#c23636"/>
<circle cx="531.8" cy="401.2" r="1.6" fill="#c23636"/>
<circle cx="552.2" cy="406.2" r="1.6" fill="#c23636"/>
<circle cx="572.5" cy="404.3" r="1.6" fill="#c23636"/>
<circle cx="592.9" cy="405.2" r="1.6" fill="#c23636"/>
</g>
<g opacity="0.92"><path d="M124.3 417.0 L144.7 417.0 L165.1 419.3 L185.4 419.3 L205.8 417.0 L226.2 416.2 L246.6 416.4 L266.9 414.5 L287.3 413.5 L307.7 408.1 L328.1 405.2 L348.4 401.0 L368.8 397.4 L389.2 390.2 L409.6 388.3 L429.9 390.2 L450.3 388.3 L470.7 377.3 L491.1 401.2 L511.4 381.1 L531.8 379.0 L552.2 391.2 L572.5 404.3 L592.9 388.8" fill="none" stroke="#b5ae26" stroke-width="1.1" stroke-linejoin="round"/>
<circle cx="124.3" cy="417.0" r="1.6" fill="#b5ae26"/>
<circle cx="144.7" cy="417.0" r="1.6" fill="#b5ae26"/>
<circle cx="165.1" cy="419.3" r="1.6" fill="#b5ae26"/>
<circle cx="185.4" cy="419.3" r="1.6" fill="#b5ae26"/>
<circle cx="205.8" cy="417.0" r="1.6" fill="#b5ae26"/>
<circle cx="226.2" cy="416.2" r="1.6" fill="#b5ae26"/>
<circle cx="246.6" cy="416.4" r="1.6" fill="#b5ae26"/>
<circle cx="266.9" cy="414.5" r="1.6" fill="#b5ae26"/>
<circle cx="287.3" cy="413.5" r="1.6" fill="#b5ae26"/>
<circle cx="307.7" cy="408.1" r="1.6" fill="#b5ae26"/>
<circle cx="328.1" cy="405.2" r="1.6" fill="#b5ae26"/>
<circle cx="348.4" cy="401.0" r="1.6" fill="#b5ae26"/>
<circle cx="368.8" cy="397.4" r="1.6" fill="#b5ae26"/>
<circle cx="389.2" cy="390.2" r="1.6" fill="#b5ae26"/>
<circle cx="409.6" cy="388.3" r="1.6" fill="#b5ae26"/>
<circle cx="429.9" cy="390.2" r="1.6" fill="#b5ae26"/>
<circle cx="450.3" cy="388.3" r="1.6" fill="#b5ae26"/>
<circle cx="470.7" cy="377.3" r="1.6" fill="#b5ae26"/>
<circle cx="491.1" cy="401.2" r="1.6" fill="#b5ae26"/>
<circle cx="511.4" cy="381.1" r="1.6" fill="#b5ae26"/>
<circle cx="531.8" cy="379.0" r="1.6" fill="#b5ae26"/>
<circle cx="552.2" cy="391.2" r="1.6" fill="#b5ae26"/>
<circle cx="572.5" cy="404.3" r="1.6" fill="#b5ae26"/>
<circle cx="592.9" cy="388.8" r="1.6" fill="#b5ae26"/>
</g>
<g opacity="0.92"><path d="M124.3 398.1 L144.7 396.2 L165.1 398.5 L185.4 396.2 L205.8 391.9 L226.2 392.3 L246.6 389.1 L266.9 385.2 L287.3 383.2 L307.7 384.0 L328.1 385.2 L348.4 385.2 L368.8 386.2 L389.2 378.2 L409.6 378.2 L429.9 376.1 L450.3 380.9 L470.7 393.5 L491.1 389.0 L511.4 396.0 L531.8 396.9 L552.2 392.1 L572.5 388.8 L592.9 388.6" fill="none" stroke="#2eb52e" stroke-width="1.1" stroke-linejoin="round"/>
<circle cx="124.3" cy="398.1" r="1.6" fill="#2eb52e"/>
<circle cx="144.7" cy="396.2" r="1.6" fill="#2eb52e"/>
<circle cx="165.1" cy="398.5" r="1.6" fill="#2eb52e"/>
<circle cx="185.4" cy="396.2" r="1.6" fill="#2eb52e"/>
<circle cx="205.8" cy="391.9" r="1.6" fill="#2eb52e"/>
<circle cx="226.2" cy="392.3" r="1.6" fill="#2eb52e"/>
<circle cx="246.6" cy="389.1" r="1.6" fill="#2eb52e"/>
<circle cx="266.9" cy="385.2" r="1.6" fill="#2eb52e"/>
<circle cx="287.3" cy="383.2" r="1.6" fill="#2eb52e"/>
<circle cx="307.7" cy="384.0" r="1.6" fill="#2eb52e"/>
<circle cx="328.1" cy="385.2" r="1.6" fill="#2eb52e"/>
<circle cx="348.4" cy="385.2" r="1.6" fill="#2eb52e"/>
<circle cx="368.8" cy="386.2" r="1.6" fill="#2eb52e"/>
<circle cx="389.2" cy="378.2" r="1.6" fill="#2eb52e"/>
<circle cx="409.6" cy="378.2" r="1.6" fill="#2eb52e"/>
<circle cx="429.9" cy="376.1" r="1.6" fill="#2eb52e"/>
<circle cx="450.3" cy="380.9" r="1.6" fill="#2eb52e"/>
<circle cx="470.7" cy="393.5" r="1.6" fill="#2eb52e"/>
<circle cx="491.1" cy="389.0" r="1.6" fill="#2eb52e"/>
<circle cx="511.4" cy="396.0" r="1.6" fill="#2eb52e"/>
<circle cx="531.8" cy="396.9" r="1.6" fill="#2eb52e"/>
<circle cx="552.2" cy="392.1" r="1.6" fill="#2eb52e"/>
<circle cx="572.5" cy="388.8" r="1.6" fill="#2eb52e"/>
<circle cx="592.9" cy="388.6" r="1.6" fill="#2eb52e"/>
</g>
<rect x="103.5" y="345.5" width="531.0" height="112.0" fill="none" stroke="#000" stroke-width="1"/>
<rect x="558.5" y="349.5" width="67" height="51" rx="3" fill="rgba(255,255,255,0.72)" stroke="#000" stroke-width="1"/>
<path d="M563 357.2 L575 361.7" stroke="#c23636" stroke-width="1.5"/><circle cx="568.5" cy="359.09999999999997" r="1.7" fill="#c23636"/>
<text class="g" x="579.0" y="363.7" font-size="12" fill="#000" font-weight="normal" text-anchor="start" textLength="43.0" lengthAdjust="spacingAndGlyphs" >Bx GSE</text>
<path d="M563 372.2 L575 376.7" stroke="#b5ae26" stroke-width="1.5"/><circle cx="568.5" cy="374.09999999999997" r="1.7" fill="#b5ae26"/>
<text class="g" x="579.0" y="378.7" font-size="12" fill="#000" font-weight="normal" text-anchor="start" textLength="43.0" lengthAdjust="spacingAndGlyphs" >By GSE</text>
<path d="M563 387.2 L575 391.7" stroke="#2eb52e" stroke-width="1.5"/><circle cx="568.5" cy="389.09999999999997" r="1.7" fill="#2eb52e"/>
<text class="g" x="579.0" y="393.7" font-size="12" fill="#000" font-weight="normal" text-anchor="start" textLength="43.0" lengthAdjust="spacingAndGlyphs" >Bz GSE</text>
<text class="g" x="188.5" y="336.7" font-size="12" fill="#000" font-weight="normal" text-anchor="start" textLength="361.0" lengthAdjust="spacingAndGlyphs" >Magnetic Field Vector in GSE Cartesian coordinates (1 hr)</text>
<text class="g" x="90.5" y="361.9" font-size="12.3" fill="#000" font-weight="normal" text-anchor="end" textLength="18.5" lengthAdjust="spacingAndGlyphs" >20.</text>
<text class="g" x="90.5" y="383.9" font-size="12.3" fill="#000" font-weight="normal" text-anchor="end" textLength="18.5" lengthAdjust="spacingAndGlyphs" >10.</text>
<text class="g" x="90.5" y="405.9" font-size="12.3" fill="#000" font-weight="normal" text-anchor="end" textLength="10.5" lengthAdjust="spacingAndGlyphs" >0.</text>
<text class="g" x="90.5" y="427.9" font-size="12.3" fill="#000" font-weight="normal" text-anchor="end" textLength="22.0" lengthAdjust="spacingAndGlyphs" >-10.</text>
<text class="g" x="90.5" y="449.9" font-size="12.3" fill="#000" font-weight="normal" text-anchor="end" textLength="22.0" lengthAdjust="spacingAndGlyphs" >-20.</text>
<text class="g" transform="translate(58.5,401.4) rotate(-90)" font-size="12.5" text-anchor="middle" textLength="14.5" lengthAdjust="spacingAndGlyphs" fill="#000">nT</text>
<text class="g" x="106.9" y="481.0" font-size="12" fill="#000" font-weight="normal" text-anchor="start" textLength="35.0" lengthAdjust="spacingAndGlyphs" >00:00</text>
<text class="g" x="229.2" y="481.0" font-size="12" fill="#000" font-weight="normal" text-anchor="start" textLength="35.0" lengthAdjust="spacingAndGlyphs" >06:00</text>
<text class="g" x="351.4" y="481.0" font-size="12" fill="#000" font-weight="normal" text-anchor="start" textLength="35.0" lengthAdjust="spacingAndGlyphs" >12:00</text>
<text class="g" x="473.6" y="481.0" font-size="12" fill="#000" font-weight="normal" text-anchor="start" textLength="35.0" lengthAdjust="spacingAndGlyphs" >18:00</text>
<text class="g" x="595.9" y="481.0" font-size="12" fill="#000" font-weight="normal" text-anchor="start" textLength="35.0" lengthAdjust="spacingAndGlyphs" >00:00</text>
<text class="g" x="106.9" y="493.4" font-size="12" fill="#000" font-weight="normal" text-anchor="start" textLength="70.0" lengthAdjust="spacingAndGlyphs" >2006-01-01</text>
<text class="g" x="595.9" y="493.4" font-size="12" fill="#000" font-weight="normal" text-anchor="start" textLength="71.5" lengthAdjust="spacingAndGlyphs" >2006-01-02</text>
<clipPath id="c3"><rect x="103.5" y="504.5" width="531.0" height="111.0"/></clipPath>
<path d="M95.5 615.5 H103.5" stroke="#000" stroke-width="1"/>
<path d="M99.5 612.5 H103.5" stroke="#000" stroke-width="1"/>
<path d="M99.5 609.5 H103.5" stroke="#000" stroke-width="1"/>
<path d="M99.5 607.5 H103.5" stroke="#000" stroke-width="1"/>
<path d="M99.5 604.5 H103.5" stroke="#000" stroke-width="1"/>
<path d="M99.5 601.5 H103.5" stroke="#000" stroke-width="1"/>
<path d="M99.5 598.5 H103.5" stroke="#000" stroke-width="1"/>
<path d="M99.5 596.5 H103.5" stroke="#000" stroke-width="1"/>
<path d="M99.5 593.5 H103.5" stroke="#000" stroke-width="1"/>
<path d="M99.5 590.5 H103.5" stroke="#000" stroke-width="1"/>
<path d="M95.5 587.5 H103.5" stroke="#000" stroke-width="1"/>
<path d="M99.5 585.5 H103.5" stroke="#000" stroke-width="1"/>
<path d="M99.5 582.5 H103.5" stroke="#000" stroke-width="1"/>
<path d="M99.5 579.5 H103.5" stroke="#000" stroke-width="1"/>
<path d="M99.5 576.5 H103.5" stroke="#000" stroke-width="1"/>
<path d="M99.5 574.5 H103.5" stroke="#000" stroke-width="1"/>
<path d="M99.5 571.5 H103.5" stroke="#000" stroke-width="1"/>
<path d="M99.5 568.5 H103.5" stroke="#000" stroke-width="1"/>
<path d="M99.5 565.5 H103.5" stroke="#000" stroke-width="1"/>
<path d="M99.5 563.5 H103.5" stroke="#000" stroke-width="1"/>
<path d="M95.5 560.5 H103.5" stroke="#000" stroke-width="1"/>
<path d="M99.5 557.5 H103.5" stroke="#000" stroke-width="1"/>
<path d="M99.5 554.5 H103.5" stroke="#000" stroke-width="1"/>
<path d="M99.5 552.5 H103.5" stroke="#000" stroke-width="1"/>
<path d="M99.5 549.5 H103.5" stroke="#000" stroke-width="1"/>
<path d="M99.5 546.5 H103.5" stroke="#000" stroke-width="1"/>
<path d="M99.5 543.5 H103.5" stroke="#000" stroke-width="1"/>
<path d="M99.5 541.5 H103.5" stroke="#000" stroke-width="1"/>
<path d="M99.5 538.5 H103.5" stroke="#000" stroke-width="1"/>
<path d="M99.5 535.5 H103.5" stroke="#000" stroke-width="1"/>
<path d="M95.5 532.5 H103.5" stroke="#000" stroke-width="1"/>
<path d="M99.5 530.5 H103.5" stroke="#000" stroke-width="1"/>
<path d="M99.5 527.5 H103.5" stroke="#000" stroke-width="1"/>
<path d="M99.5 524.5 H103.5" stroke="#000" stroke-width="1"/>
<path d="M99.5 521.5 H103.5" stroke="#000" stroke-width="1"/>
<path d="M99.5 519.5 H103.5" stroke="#000" stroke-width="1"/>
<path d="M99.5 516.5 H103.5" stroke="#000" stroke-width="1"/>
<path d="M99.5 513.5 H103.5" stroke="#000" stroke-width="1"/>
<path d="M99.5 510.5 H103.5" stroke="#000" stroke-width="1"/>
<path d="M99.5 508.5 H103.5" stroke="#000" stroke-width="1"/>
<path d="M95.5 505.5 H103.5" stroke="#000" stroke-width="1"/>
<path d="M104.5 615.5 V619.5" stroke="#000" stroke-width="1"/>
<path d="M124.5 615.5 V623.5" stroke="#000" stroke-width="1"/>
<path d="M144.5 615.5 V619.5" stroke="#000" stroke-width="1"/>
<path d="M165.5 615.5 V619.5" stroke="#000" stroke-width="1"/>
<path d="M185.5 615.5 V619.5" stroke="#000" stroke-width="1"/>
<path d="M206.5 615.5 V619.5" stroke="#000" stroke-width="1"/>
<path d="M226.5 615.5 V619.5" stroke="#000" stroke-width="1"/>
<path d="M246.5 615.5 V623.5" stroke="#000" stroke-width="1"/>
<path d="M267.5 615.5 V619.5" stroke="#000" stroke-width="1"/>
<path d="M287.5 615.5 V619.5" stroke="#000" stroke-width="1"/>
<path d="M307.5 615.5 V619.5" stroke="#000" stroke-width="1"/>
<path d="M328.5 615.5 V619.5" stroke="#000" stroke-width="1"/>
<path d="M348.5 615.5 V619.5" stroke="#000" stroke-width="1"/>
<path d="M369.5 615.5 V623.5" stroke="#000" stroke-width="1"/>
<path d="M389.5 615.5 V619.5" stroke="#000" stroke-width="1"/>
<path d="M409.5 615.5 V619.5" stroke="#000" stroke-width="1"/>
<path d="M430.5 615.5 V619.5" stroke="#000" stroke-width="1"/>
<path d="M450.5 615.5 V619.5" stroke="#000" stroke-width="1"/>
<path d="M470.5 615.5 V619.5" stroke="#000" stroke-width="1"/>
<path d="M491.5 615.5 V623.5" stroke="#000" stroke-width="1"/>
<path d="M511.5 615.5 V619.5" stroke="#000" stroke-width="1"/>
<path d="M532.5 615.5 V619.5" stroke="#000" stroke-width="1"/>
<path d="M552.5 615.5 V619.5" stroke="#000" stroke-width="1"/>
<path d="M572.5 615.5 V619.5" stroke="#000" stroke-width="1"/>
<path d="M593.5 615.5 V619.5" stroke="#000" stroke-width="1"/>
<path d="M613.5 615.5 V623.5" stroke="#000" stroke-width="1"/>
<path d="M634.5 615.5 V619.5" stroke="#000" stroke-width="1"/>
<g shape-rendering="crispEdges"><path d="M103.5 612.5 H634.5" stroke="rgba(0,0,0,0.075)" stroke-width="1"/><path d="M103.5 609.5 H634.5" stroke="rgba(0,0,0,0.075)" stroke-width="1"/><path d="M103.5 607.5 H634.5" stroke="rgba(0,0,0,0.075)" stroke-width="1"/><path d="M103.5 604.5 H634.5" stroke="rgba(0,0,0,0.075)" stroke-width="1"/><path d="M103.5 601.5 H634.5" stroke="rgba(0,0,0,0.075)" stroke-width="1"/><path d="M103.5 598.5 H634.5" stroke="rgba(0,0,0,0.075)" stroke-width="1"/><path d="M103.5 596.5 H634.5" stroke="rgba(0,0,0,0.075)" stroke-width="1"/><path d="M103.5 593.5 H634.5" stroke="rgba(0,0,0,0.075)" stroke-width="1"/><path d="M103.5 590.5 H634.5" stroke="rgba(0,0,0,0.075)" stroke-width="1"/><path d="M103.5 587.5 H634.5" stroke="rgba(0,0,0,0.19)" stroke-width="1"/><path d="M103.5 585.5 H634.5" stroke="rgba(0,0,0,0.075)" stroke-width="1"/><path d="M103.5 582.5 H634.5" stroke="rgba(0,0,0,0.075)" stroke-width="1"/><path d="M103.5 579.5 H634.5" stroke="rgba(0,0,0,0.075)" stroke-width="1"/><path d="M103.5 576.5 H634.5" stroke="rgba(0,0,0,0.075)" stroke-width="1"/><path d="M103.5 574.5 H634.5" stroke="rgba(0,0,0,0.075)" stroke-width="1"/><path d="M103.5 571.5 H634.5" stroke="rgba(0,0,0,0.075)" stroke-width="1"/><path d="M103.5 568.5 H634.5" stroke="rgba(0,0,0,0.075)" stroke-width="1"/><path d="M103.5 565.5 H634.5" stroke="rgba(0,0,0,0.075)" stroke-width="1"/><path d="M103.5 563.5 H634.5" stroke="rgba(0,0,0,0.075)" stroke-width="1"/><path d="M103.5 560.5 H634.5" stroke="rgba(0,0,0,0.19)" stroke-width="1"/><path d="M103.5 557.5 H634.5" stroke="rgba(0,0,0,0.075)" stroke-width="1"/><path d="M103.5 554.5 H634.5" stroke="rgba(0,0,0,0.075)" stroke-width="1"/><path d="M103.5 552.5 H634.5" stroke="rgba(0,0,0,0.075)" stroke-width="1"/><path d="M103.5 549.5 H634.5" stroke="rgba(0,0,0,0.075)" stroke-width="1"/><path d="M103.5 546.5 H634.5" stroke="rgba(0,0,0,0.075)" stroke-width="1"/><path d="M103.5 543.5 H634.5" stroke="rgba(0,0,0,0.075)" stroke-width="1"/><path d="M103.5 541.5 H634.5" stroke="rgba(0,0,0,0.075)" stroke-width="1"/><path d="M103.5 538.5 H634.5" stroke="rgba(0,0,0,0.075)" stroke-width="1"/><path d="M103.5 535.5 H634.5" stroke="rgba(0,0,0,0.075)" stroke-width="1"/><path d="M103.5 532.5 H634.5" stroke="rgba(0,0,0,0.19)" stroke-width="1"/><path d="M103.5 530.5 H634.5" stroke="rgba(0,0,0,0.075)" stroke-width="1"/><path d="M103.5 527.5 H634.5" stroke="rgba(0,0,0,0.075)" stroke-width="1"/><path d="M103.5 524.5 H634.5" stroke="rgba(0,0,0,0.075)" stroke-width="1"/><path d="M103.5 521.5 H634.5" stroke="rgba(0,0,0,0.075)" stroke-width="1"/><path d="M103.5 519.5 H634.5" stroke="rgba(0,0,0,0.075)" stroke-width="1"/><path d="M103.5 516.5 H634.5" stroke="rgba(0,0,0,0.075)" stroke-width="1"/><path d="M103.5 513.5 H634.5" stroke="rgba(0,0,0,0.075)" stroke-width="1"/><path d="M103.5 510.5 H634.5" stroke="rgba(0,0,0,0.075)" stroke-width="1"/><path d="M103.5 508.5 H634.5" stroke="rgba(0,0,0,0.075)" stroke-width="1"/><path d="M103.5 505.5 H634.5" stroke="rgba(0,0,0,0.19)" stroke-width="1"/><path d="M104.5 504.5 V615.5" stroke="rgba(0,0,0,0.08)" stroke-width="1"/><path d="M124.5 504.5 V615.5" stroke="rgba(0,0,0,0.19)" stroke-width="1"/><path d="M144.5 504.5 V615.5" stroke="rgba(0,0,0,0.08)" stroke-width="1"/><path d="M165.5 504.5 V615.5" stroke="rgba(0,0,0,0.08)" stroke-width="1"/><path d="M185.5 504.5 V615.5" stroke="rgba(0,0,0,0.08)" stroke-width="1"/><path d="M206.5 504.5 V615.5" stroke="rgba(0,0,0,0.08)" stroke-width="1"/><path d="M226.5 504.5 V615.5" stroke="rgba(0,0,0,0.08)" stroke-width="1"/><path d="M246.5 504.5 V615.5" stroke="rgba(0,0,0,0.19)" stroke-width="1"/><path d="M267.5 504.5 V615.5" stroke="rgba(0,0,0,0.08)" stroke-width="1"/><path d="M287.5 504.5 V615.5" stroke="rgba(0,0,0,0.08)" stroke-width="1"/><path d="M307.5 504.5 V615.5" stroke="rgba(0,0,0,0.08)" stroke-width="1"/><path d="M328.5 504.5 V615.5" stroke="rgba(0,0,0,0.08)" stroke-width="1"/><path d="M348.5 504.5 V615.5" stroke="rgba(0,0,0,0.08)" stroke-width="1"/><path d="M369.5 504.5 V615.5" stroke="rgba(0,0,0,0.19)" stroke-width="1"/><path d="M389.5 504.5 V615.5" stroke="rgba(0,0,0,0.08)" stroke-width="1"/><path d="M409.5 504.5 V615.5" stroke="rgba(0,0,0,0.08)" stroke-width="1"/><path d="M430.5 504.5 V615.5" stroke="rgba(0,0,0,0.08)" stroke-width="1"/><path d="M450.5 504.5 V615.5" stroke="rgba(0,0,0,0.08)" stroke-width="1"/><path d="M470.5 504.5 V615.5" stroke="rgba(0,0,0,0.08)" stroke-width="1"/><path d="M491.5 504.5 V615.5" stroke="rgba(0,0,0,0.19)" stroke-width="1"/><path d="M511.5 504.5 V615.5" stroke="rgba(0,0,0,0.08)" stroke-width="1"/><path d="M532.5 504.5 V615.5" stroke="rgba(0,0,0,0.08)" stroke-width="1"/><path d="M552.5 504.5 V615.5" stroke="rgba(0,0,0,0.08)" stroke-width="1"/><path d="M572.5 504.5 V615.5" stroke="rgba(0,0,0,0.08)" stroke-width="1"/><path d="M593.5 504.5 V615.5" stroke="rgba(0,0,0,0.08)" stroke-width="1"/><path d="M613.5 504.5 V615.5" stroke="rgba(0,0,0,0.19)" stroke-width="1"/></g>
<g opacity="0.92"><path d="M124.3 520.2 L144.7 520.2 L165.1 520.2 L185.4 520.2 L205.8 520.2 L226.2 520.2 L246.6 520.2 L266.9 520.2 L287.3 520.2 L307.7 520.2 L328.1 520.2 L348.4 520.2 L368.8 520.2 L389.2 520.2 L409.6 520.2 L429.9 520.2 L450.3 520.2 L470.7 520.2 L491.1 520.2 L511.4 520.2 L531.8 520.2 L552.2 520.2 L572.5 520.2 L592.9 520.2" fill="none" stroke="#c23636" stroke-width="1.1" stroke-linejoin="round"/>
<circle cx="124.3" cy="520.2" r="1.6" fill="#c23636"/>
<circle cx="144.7" cy="520.2" r="1.6" fill="#c23636"/>
<circle cx="165.1" cy="520.2" r="1.6" fill="#c23636"/>
<circle cx="185.4" cy="520.2" r="1.6" fill="#c23636"/>
<circle cx="205.8" cy="520.2" r="1.6" fill="#c23636"/>
<circle cx="226.2" cy="520.2" r="1.6" fill="#c23636"/>
<circle cx="246.6" cy="520.2" r="1.6" fill="#c23636"/>
<circle cx="266.9" cy="520.2" r="1.6" fill="#c23636"/>
<circle cx="287.3" cy="520.2" r="1.6" fill="#c23636"/>
<circle cx="307.7" cy="520.2" r="1.6" fill="#c23636"/>
<circle cx="328.1" cy="520.2" r="1.6" fill="#c23636"/>
<circle cx="348.4" cy="520.2" r="1.6" fill="#c23636"/>
<circle cx="368.8" cy="520.2" r="1.6" fill="#c23636"/>
<circle cx="389.2" cy="520.2" r="1.6" fill="#c23636"/>
<circle cx="409.6" cy="520.2" r="1.6" fill="#c23636"/>
<circle cx="429.9" cy="520.2" r="1.6" fill="#c23636"/>
<circle cx="450.3" cy="520.2" r="1.6" fill="#c23636"/>
<circle cx="470.7" cy="520.2" r="1.6" fill="#c23636"/>
<circle cx="491.1" cy="520.2" r="1.6" fill="#c23636"/>
<circle cx="511.4" cy="520.2" r="1.6" fill="#c23636"/>
<circle cx="531.8" cy="520.2" r="1.6" fill="#c23636"/>
<circle cx="552.2" cy="520.2" r="1.6" fill="#c23636"/>
<circle cx="572.5" cy="520.2" r="1.6" fill="#c23636"/>
<circle cx="592.9" cy="520.2" r="1.6" fill="#c23636"/>
</g>
<g opacity="0.92"><path d="M124.3 567.2 L144.7 567.2 L165.1 567.2 L185.4 567.2 L205.8 567.2 L226.2 566.4 L246.6 566.4 L266.9 566.4 L287.3 566.4 L307.7 566.4 L328.1 566.4 L348.4 566.4 L368.8 566.4 L389.2 566.4 L409.6 566.4 L429.9 566.4 L450.3 566.4 L470.7 567.4 L491.1 567.4 L511.4 567.4 L531.8 567.4 L552.2 567.4 L572.5 567.4 L592.9 567.4" fill="none" stroke="#b5ae26" stroke-width="1.1" stroke-linejoin="round"/>
<circle cx="124.3" cy="567.2" r="1.6" fill="#b5ae26"/>
<circle cx="144.7" cy="567.2" r="1.6" fill="#b5ae26"/>
<circle cx="165.1" cy="567.2" r="1.6" fill="#b5ae26"/>
<circle cx="185.4" cy="567.2" r="1.6" fill="#b5ae26"/>
<circle cx="205.8" cy="567.2" r="1.6" fill="#b5ae26"/>
<circle cx="226.2" cy="566.4" r="1.6" fill="#b5ae26"/>
<circle cx="246.6" cy="566.4" r="1.6" fill="#b5ae26"/>
<circle cx="266.9" cy="566.4" r="1.6" fill="#b5ae26"/>
<circle cx="287.3" cy="566.4" r="1.6" fill="#b5ae26"/>
<circle cx="307.7" cy="566.4" r="1.6" fill="#b5ae26"/>
<circle cx="328.1" cy="566.4" r="1.6" fill="#b5ae26"/>
<circle cx="348.4" cy="566.4" r="1.6" fill="#b5ae26"/>
<circle cx="368.8" cy="566.4" r="1.6" fill="#b5ae26"/>
<circle cx="389.2" cy="566.4" r="1.6" fill="#b5ae26"/>
<circle cx="409.6" cy="566.4" r="1.6" fill="#b5ae26"/>
<circle cx="429.9" cy="566.4" r="1.6" fill="#b5ae26"/>
<circle cx="450.3" cy="566.4" r="1.6" fill="#b5ae26"/>
<circle cx="470.7" cy="567.4" r="1.6" fill="#b5ae26"/>
<circle cx="491.1" cy="567.4" r="1.6" fill="#b5ae26"/>
<circle cx="511.4" cy="567.4" r="1.6" fill="#b5ae26"/>
<circle cx="531.8" cy="567.4" r="1.6" fill="#b5ae26"/>
<circle cx="552.2" cy="567.4" r="1.6" fill="#b5ae26"/>
<circle cx="572.5" cy="567.4" r="1.6" fill="#b5ae26"/>
<circle cx="592.9" cy="567.4" r="1.6" fill="#b5ae26"/>
</g>
<g opacity="0.92"><path d="M124.3 558.2 L144.7 558.2 L165.1 557.0 L185.4 557.0 L205.8 557.0 L226.2 556.1 L246.6 556.1 L266.9 556.1 L287.3 555.2 L307.7 555.2 L328.1 555.2 L348.4 555.2 L368.8 555.3 L389.2 556.3 L409.6 556.3 L429.9 556.3 L450.3 556.3 L470.7 557.2 L491.1 557.1 L511.4 557.1 L531.8 558.4 L552.2 557.7 L572.5 557.7 L592.9 557.7" fill="none" stroke="#2eb52e" stroke-width="1.1" stroke-linejoin="round"/>
<circle cx="124.3" cy="558.2" r="1.6" fill="#2eb52e"/>
<circle cx="144.7" cy="558.2" r="1.6" fill="#2eb52e"/>
<circle cx="165.1" cy="557.0" r="1.6" fill="#2eb52e"/>
<circle cx="185.4" cy="557.0" r="1.6" fill="#2eb52e"/>
<circle cx="205.8" cy="557.0" r="1.6" fill="#2eb52e"/>
<circle cx="226.2" cy="556.1" r="1.6" fill="#2eb52e"/>
<circle cx="246.6" cy="556.1" r="1.6" fill="#2eb52e"/>
<circle cx="266.9" cy="556.1" r="1.6" fill="#2eb52e"/>
<circle cx="287.3" cy="555.2" r="1.6" fill="#2eb52e"/>
<circle cx="307.7" cy="555.2" r="1.6" fill="#2eb52e"/>
<circle cx="328.1" cy="555.2" r="1.6" fill="#2eb52e"/>
<circle cx="348.4" cy="555.2" r="1.6" fill="#2eb52e"/>
<circle cx="368.8" cy="555.3" r="1.6" fill="#2eb52e"/>
<circle cx="389.2" cy="556.3" r="1.6" fill="#2eb52e"/>
<circle cx="409.6" cy="556.3" r="1.6" fill="#2eb52e"/>
<circle cx="429.9" cy="556.3" r="1.6" fill="#2eb52e"/>
<circle cx="450.3" cy="556.3" r="1.6" fill="#2eb52e"/>
<circle cx="470.7" cy="557.2" r="1.6" fill="#2eb52e"/>
<circle cx="491.1" cy="557.1" r="1.6" fill="#2eb52e"/>
<circle cx="511.4" cy="557.1" r="1.6" fill="#2eb52e"/>
<circle cx="531.8" cy="558.4" r="1.6" fill="#2eb52e"/>
<circle cx="552.2" cy="557.7" r="1.6" fill="#2eb52e"/>
<circle cx="572.5" cy="557.7" r="1.6" fill="#2eb52e"/>
<circle cx="592.9" cy="557.7" r="1.6" fill="#2eb52e"/>
</g>
<rect x="103.5" y="504.5" width="531.0" height="111.0" fill="none" stroke="#000" stroke-width="1"/>
<rect x="533.5" y="508.5" width="92" height="51" rx="3" fill="rgba(255,255,255,0.72)" stroke="#000" stroke-width="1"/>
<path d="M538 516.2 L550 520.7" stroke="#c23636" stroke-width="1.5"/><circle cx="543.5" cy="518.1" r="1.7" fill="#c23636"/>
<text class="g" x="554.0" y="522.7" font-size="12" fill="#000" font-weight="normal" text-anchor="start" textLength="66.0" lengthAdjust="spacingAndGlyphs" >ACE X-GSM</text>
<path d="M538 531.2 L550 535.7" stroke="#b5ae26" stroke-width="1.5"/><circle cx="543.5" cy="533.1" r="1.7" fill="#b5ae26"/>
<text class="g" x="554.0" y="537.7" font-size="12" fill="#000" font-weight="normal" text-anchor="start" textLength="66.0" lengthAdjust="spacingAndGlyphs" >ACE Y-GSM</text>
<path d="M538 546.2 L550 550.7" stroke="#2eb52e" stroke-width="1.5"/><circle cx="543.5" cy="548.1" r="1.7" fill="#2eb52e"/>
<text class="g" x="554.0" y="552.7" font-size="12" fill="#000" font-weight="normal" text-anchor="start" textLength="66.0" lengthAdjust="spacingAndGlyphs" >ACE Z-GSM</text>
<text class="g" x="245.0" y="495.7" font-size="12" fill="#000" font-weight="normal" text-anchor="start" textLength="247.0" lengthAdjust="spacingAndGlyphs" >ACE s/c position, 3 comp. in GSM coord.</text>
<text class="g" x="49.2" y="512.8" font-size="12" fill="#000" font-weight="normal" text-anchor="start" textLength="33.4" lengthAdjust="spacingAndGlyphs" >2×10</text>
<text class="g" x="83.3" y="505.3" font-size="11" fill="#000" font-weight="normal" text-anchor="start" textLength="7.2" lengthAdjust="spacingAndGlyphs" >6</text>
<text class="g" x="49.2" y="539.8" font-size="12" fill="#000" font-weight="normal" text-anchor="start" textLength="33.4" lengthAdjust="spacingAndGlyphs" >1×10</text>
<text class="g" x="83.3" y="532.3" font-size="11" fill="#000" font-weight="normal" text-anchor="start" textLength="7.2" lengthAdjust="spacingAndGlyphs" >6</text>
<text class="g" x="45.4" y="594.8" font-size="12" fill="#000" font-weight="normal" text-anchor="start" textLength="37.2" lengthAdjust="spacingAndGlyphs" >-1×10</text>
<text class="g" x="83.3" y="587.3" font-size="11" fill="#000" font-weight="normal" text-anchor="start" textLength="7.2" lengthAdjust="spacingAndGlyphs" >6</text>
<text class="g" x="45.4" y="622.8" font-size="12" fill="#000" font-weight="normal" text-anchor="start" textLength="37.2" lengthAdjust="spacingAndGlyphs" >-2×10</text>
<text class="g" x="83.3" y="615.3" font-size="11" fill="#000" font-weight="normal" text-anchor="start" textLength="7.2" lengthAdjust="spacingAndGlyphs" >6</text>
<text class="g" x="90.5" y="565.0" font-size="12" fill="#000" font-weight="normal" text-anchor="end" textLength="10.5" lengthAdjust="spacingAndGlyphs" >0.</text>
<text class="g" transform="translate(36,559.8) rotate(-90)" font-size="12.5" text-anchor="middle" textLength="17" lengthAdjust="spacingAndGlyphs" fill="#000">km</text>
<text class="g" x="106.9" y="639.0" font-size="12" fill="#000" font-weight="normal" text-anchor="start" textLength="35.0" lengthAdjust="spacingAndGlyphs" >00:00</text>
<text class="g" x="229.2" y="639.0" font-size="12" fill="#000" font-weight="normal" text-anchor="start" textLength="35.0" lengthAdjust="spacingAndGlyphs" >06:00</text>
<text class="g" x="351.4" y="639.0" font-size="12" fill="#000" font-weight="normal" text-anchor="start" textLength="35.0" lengthAdjust="spacingAndGlyphs" >12:00</text>
<text class="g" x="473.6" y="639.0" font-size="12" fill="#000" font-weight="normal" text-anchor="start" textLength="35.0" lengthAdjust="spacingAndGlyphs" >18:00</text>
<text class="g" x="595.9" y="639.0" font-size="12" fill="#000" font-weight="normal" text-anchor="start" textLength="35.0" lengthAdjust="spacingAndGlyphs" >00:00</text>
<text class="g" x="106.9" y="651.4" font-size="12" fill="#000" font-weight="normal" text-anchor="start" textLength="70.0" lengthAdjust="spacingAndGlyphs" >2006-01-01</text>
<text class="g" x="595.9" y="651.4" font-size="12" fill="#000" font-weight="normal" text-anchor="start" textLength="71.5" lengthAdjust="spacingAndGlyphs" >2006-01-02</text>
</svg></body></html>
